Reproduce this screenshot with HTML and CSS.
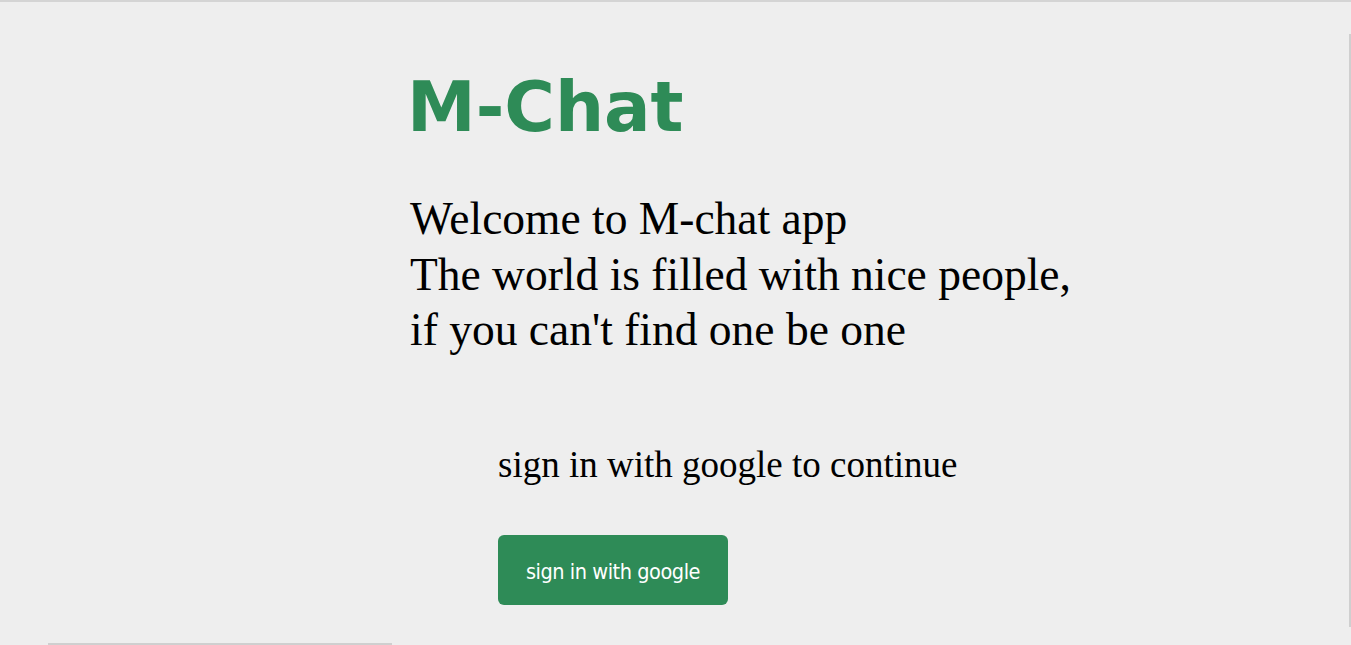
FILE: index.html
```html
<!DOCTYPE html>
<html lang="en">
<head>
<meta charset="utf-8">
<title>M-Chat</title>
<link rel="stylesheet" href="styles.css">
</head>
<body>
<main class="page">
  <h1 class="brand">M-Chat</h1>
  <p class="welcome">Welcome to M-chat app<br>The world is filled with nice people,<br>if you can't find one be one</p>
  <section class="signin">
    <p class="signin-text">sign in with google to continue</p>
    <button class="signin-btn" type="button">sign in with google</button>
  </section>
</main>
<div class="thumb thumb-right"></div>
<div class="thumb thumb-bottom"></div>
</body>
</html>
```
FILE: styles.css
```css
html, body {
  margin: 0;
  padding: 0;
}
body {
  background: #eeeeee;
  border-top: 2px solid #d4d4d4;
  height: 643px;
  overflow: hidden;
  position: relative;
  font-family: "Liberation Serif", "Times New Roman", serif;
  color: #000;
}
.page {
  display: flex;
  flex-direction: column;
  align-items: flex-start;
  padding-left: 404px;
}
.brand {
  margin: 64px 0 0 3px;
  font-family: "DejaVu Sans", Verdana, sans-serif;
  font-weight: bold;
  font-size: 69px;
  line-height: 82px;
  color: #2e8b57;
}
.welcome {
  margin: 43px 0 0 6px;
  font-size: 45.5px;
  line-height: 55.5px;
}
.signin {
  margin: 86px 0 0 94px;
  display: flex;
  flex-direction: column;
  align-items: flex-start;
}
.signin-text {
  margin: 0;
  font-size: 37px;
  line-height: 42px;
}
.signin-btn {
  margin-top: 49px;
  width: 230px;
  height: 70px;
  border: none;
  border-radius: 6px;
  background: #2e8b57;
  color: #fff;
  font-family: "DejaVu Sans Condensed", "DejaVu Sans", sans-serif;
  font-stretch: condensed;
  font-size: 21.5px;
  letter-spacing: -0.45px;
  display: flex;
  align-items: center;
  justify-content: center;
  padding: 4px 0 0 0;
}
.thumb {
  position: absolute;
  background: #cfcfcf;
}
.thumb-right {
  right: 0;
  top: 32px;
  width: 2px;
  height: 593px;
}
.thumb-bottom {
  left: 48px;
  bottom: 0;
  width: 344px;
  height: 2px;
}
```
